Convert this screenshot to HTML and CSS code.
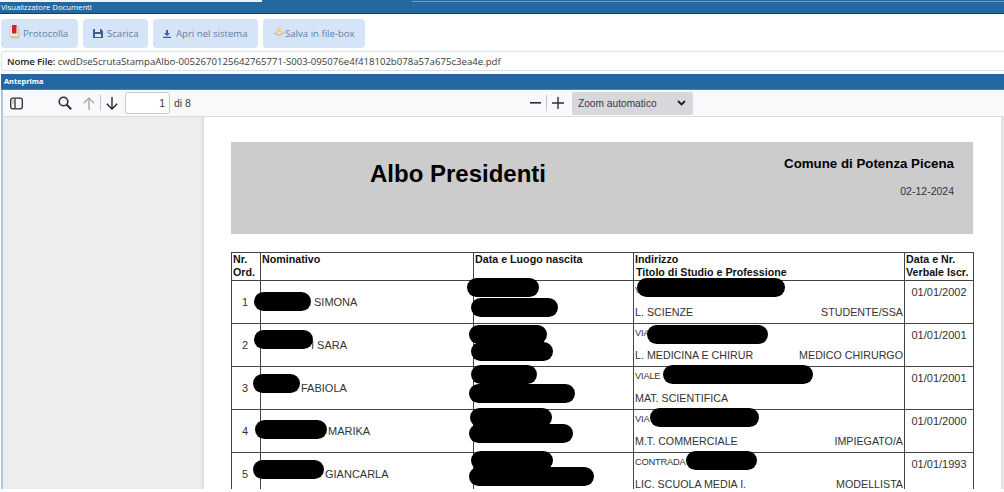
FILE: index.html
```html
<!DOCTYPE html>
<html lang="it">
<head>
<meta charset="utf-8">
<title>Visualizzatore Documenti</title>
<link rel="stylesheet" href="styles.css">
</head>
<body>
<div class="tabs"><span class="tab-a"></span><span class="tab-gap"></span><span class="tab-b"></span></div>
<header class="titlebar">Visualizzatore Documenti</header>
<nav class="actions">
  <button class="btn b1"><svg width="11" height="14" viewBox="0 0 11 14"><path d="M1 1.500h8v10H1z" fill="#f3efe6" stroke="#bdb39c" stroke-width=".6"/><path d="M3 0h4.500v8.500H3z" fill="#c8242b"/><path d="M1 11.500l2 2h7.500V3.500L9 2v9.500z" fill="#cfc5ae"/></svg>Protocolla</button>
  <button class="btn b2"><svg width="10" height="9" viewBox="0 0 10 9"><path d="M0 0h8l2 2v7H0z" fill="#3f5f92"/><path d="M2 0h5v3H2zM2 5h6v3H2z" fill="#dbe6f6"/></svg>Scarica</button>
  <button class="btn b3"><svg width="8" height="8" viewBox="0 0 8 8"><path d="M3 0h2v3h2L4 6 1 3h2zM0 6.800h8V8H0z" fill="#3f5f92"/></svg>Apri nel sistema</button>
  <button class="btn b4"><svg width="14" height="10" viewBox="0 0 14 10"><path d="M1 6.500L7 9l6-3-3-1.500-5 .5z" fill="#b9bcc4"/><path d="M4.500 5.500l.5-4 3-1 1.500 4z" fill="#efd27a"/><path d="M3 6l4 1.500L11 5.500l-3-1z" fill="#f2e3ae"/></svg>Salva in file-box</button>
</nav>
<div class="filename"><b>Nome File:</b> cwdDseScrutaStampaAlbo-0052670125642765771-S003-095076e4f418102b078a57a675c3ea4e.pdf</div>
<section class="preview">
  <h2 class="preview-title">Anteprima</h2>
  <div class="toolbar">
    <div class="tool-left">
      <svg class="ic-side" width="13" height="13" viewBox="0 0 13 13" fill="none" stroke="#2b2b33" stroke-width="1.300"><rect x=".7" y="1.200" width="11.600" height="10.600" rx="2"/><path d="M5 1.500v10"/><path d="M2.700 3.800h.8M2.700 5.800h.8" stroke-width="1"/></svg>
      <svg class="ic-search" width="14" height="14" viewBox="0 0 14 14" fill="none" stroke="#2b2b33" stroke-width="1.600"><circle cx="5.500" cy="5.500" r="4.300"/><path d="M8.700 8.700l4.500 4.500" stroke-width="2"/></svg>
      <svg class="ic-up" width="12" height="13" viewBox="0 0 12 13" fill="none" stroke="#a9a9ae" stroke-width="1.400"><path d="M6 13V1M.8 6.200L6 1l5.200 5.200"/></svg>
      <span class="sep"></span>
      <svg class="ic-down" width="12" height="13" viewBox="0 0 12 13" fill="none" stroke="#2b2b33" stroke-width="1.400"><path d="M6 0v12M.8 6.800L6 12l5.200-5.200"/></svg>
      <span class="page-input">1</span>
      <span class="page-total">di 8</span>
    </div>
    <div class="tool-zoom">
      <svg width="11" height="2" viewBox="0 0 11 2"><path d="M0 0h11v1.600H0z" fill="#2b2b33"/></svg>
      <span class="sep sep-zoom"></span>
      <svg width="12" height="12" viewBox="0 0 12 12"><path d="M5.300 0h1.400v12H5.300zM0 5.300h12v1.400H0z" fill="#2b2b33"/></svg>
      <span class="zoom-select">Zoom automatico<svg width="9" height="6" viewBox="0 0 9 6" fill="none" stroke="#1c1c22" stroke-width="1.800"><path d="M1 1l3.500 3.500L8 1"/></svg></span>
    </div>
  </div>
  <div class="viewer">
    <aside class="sidebar"></aside>
    <main class="page">
      <div class="doc-head">
        <h1 class="doc-title">Albo Presidenti</h1>
        <div class="doc-meta">
          <div class="doc-town">Comune di Potenza Picena</div>
          <div class="doc-date">02-12-2024</div>
        </div>
      </div>
      <table class="albo">
        <colgroup><col class="c1"><col class="c2"><col class="c3"><col class="c4"><col class="c5"></colgroup>
        <thead>
          <tr><th>Nr.<br>Ord.</th><th>Nominativo</th><th>Data e Luogo nascita</th><th>Indirizzo<br><span class="th-sub">Titolo di Studio e Professione</span></th><th>Data e Nr.<br>Verbale Iscr.</th></tr>
        </thead>
        <tbody>
          <tr><td class="num">1</td><td class="name n1">SIMONA</td><td></td><td class="addr"><div class="street">V</div><div class="job"><span>L. SCIENZE</span><span>STUDENTE/SSA</span></div></td><td class="date">01/01/2002</td></tr>
          <tr><td class="num">2</td><td class="name n2">I SARA</td><td></td><td class="addr"><div class="street">VIA</div><div class="job"><span>L. MEDICINA E CHIRUR</span><span>MEDICO CHIRURGO</span></div></td><td class="date">01/01/2001</td></tr>
          <tr><td class="num">3</td><td class="name n3">FABIOLA</td><td></td><td class="addr"><div class="street">VIALE</div><div class="job"><span>MAT. SCIENTIFICA</span></div></td><td class="date">01/01/2001</td></tr>
          <tr><td class="num">4</td><td class="name n4">MARIKA</td><td></td><td class="addr"><div class="street">VIA</div><div class="job"><span>M.T. COMMERCIALE</span><span>IMPIEGATO/A</span></div></td><td class="date">01/01/2000</td></tr>
          <tr><td class="num">5</td><td class="name n5">GIANCARLA</td><td></td><td class="addr"><div class="street">CONTRADA</div><div class="job"><span>LIC. SCUOLA MEDIA I.</span><span>MODELLISTA</span></div></td><td class="date">01/01/1993</td></tr>
        </tbody>
      </table>
      <span class="mask m1"></span><span class="mask m2"></span><span class="mask m3"></span><span class="mask m4"></span><span class="mask m5"></span>
      <span class="mask d1a"></span><span class="mask d1b"></span><span class="mask d2a"></span><span class="mask d2b"></span><span class="mask d3a"></span><span class="mask d3b"></span><span class="mask d4a"></span><span class="mask d4b"></span><span class="mask d5a"></span><span class="mask d5b"></span>
      <span class="mask a1"></span><span class="mask a2"></span><span class="mask a3"></span><span class="mask a4"></span><span class="mask a5"></span>
    </main>
    <div class="scroll-edge"></div>
  </div>
</section>
</body>
</html>
```
FILE: styles.css
```css
* { box-sizing: border-box; }
html, body { height: 100%; }
body {
  margin: 0;
  height: 492px;
  overflow: hidden;
  background: #fff;
  display: flex;
  flex-direction: column;
  font-family: "Open Sans", sans-serif;
}
.tabs { display: flex; height: 2px; flex: none; background: #2468a2; }
.tab-a { width: 262px; background: #eef3f8; }
.tab-gap { width: 150px; }
.tab-b { flex: 1; background: #6f9ec6; height: 1px; margin-top: 1px; }
.titlebar {
  flex: none;
  height: 12px;
  background: #2468a2;
  border-bottom: 1px solid #17405f;
  color: #fff;
  font-size: 7.700px;
  line-height: 11px;
  padding-left: 1px;
  white-space: nowrap;
}
.actions { flex: none; display: flex; gap: 5px; padding: 5px 0 0 1px; height: 34px; }
.btn {
  height: 29px;
  display: flex;
  align-items: center;
  border: 0;
  border-radius: 4px;
  background: #d6e4f8;
  color: #5f7fa8;
  font: 9.600px/1 "Open Sans", sans-serif;
  padding: 0;
  white-space: nowrap;
}
.b1 { width: 77px; padding-left: 8px; }
.b1 svg { margin-right: 3px; margin-top: -4px; }
.b2 { width: 65px; padding-left: 10px; }
.b2 svg { margin-right: 4px; }
.b3 { width: 105px; padding-left: 10px; }
.b3 svg { margin-right: 5px; }
.b4 { width: 102px; padding-left: 9px; }
.b4 svg { margin-right: -1px; margin-top: -3px; }
.filename {
  flex: none;
  height: 20px;
  margin: 3px 0 3px 1px;
  padding-left: 5px;
  border: 1px solid #d5e4f0;
  border-right: 0;
  border-radius: 3px 0 0 3px;
  color: #3a3a3a;
  font-size: 9.620px;
  line-height: 19px;
  white-space: nowrap;
}
.filename b { font-weight: 600; color: #222; letter-spacing: -.1px; }
.preview {
  flex: 1;
  min-height: 0;
  margin-bottom: 3px;
  margin-left: 1px;
  border-left: 2px solid #a9c9e6;
  display: flex;
  flex-direction: column;
}
.preview-title {
  flex: none;
  margin: 0 0 0 -2px;
  height: 16px;
  background: #2468a2;
  border-bottom: 1px solid #5a7f9e;
  color: #fff;
  font-size: 7.400px;
  font-weight: 700;
  line-height: 15px;
  padding-left: 3px;
}
.toolbar {
  flex: none;
  height: 27px;
  background: #f9f9fb;
  border-bottom: 1px solid #dcdce0;
  position: relative;
  display: flex;
  align-items: center;
}
.tool-left { display: flex; align-items: center; color: #3a3a40; font: 10px "Liberation Sans", sans-serif; }
.ic-side { margin-left: 7px; }
.ic-search { margin-left: 35px; }
.ic-up { margin-left: 11px; }
.sep { width: 1px; height: 16px; background: #c4c4c8; margin: 0 5px; }
.page-input {
  width: 45px;
  height: 22px;
  margin-left: 7px;
  background: #fff;
  border: 1px solid #c8c8cc;
  border-radius: 3px;
  text-align: right;
  padding-right: 4px;
  font-size: 10.500px;
  line-height: 20px;
}
.page-total { margin-left: 4px; font-size: 10.500px; }
.tool-zoom { display: flex; align-items: center; margin-left: 339px; }
.sep-zoom { margin: 0 5px; }
.zoom-select {
  width: 121px;
  height: 23px;
  margin-left: 8px;
  background: #d8d8dc;
  border-radius: 2px;
  display: flex;
  align-items: center;
  justify-content: space-between;
  padding: 0 7px 0 6px;
  color: #3a3a40;
  font: 10.200px "Liberation Sans", sans-serif;
}
.viewer { flex: 1; min-height: 0; display: flex; overflow: hidden; }
.sidebar {
  flex: none;
  width: 201px;
  background: #ededf0;
  border-right: 1px solid #dfdfe3;
  box-shadow: inset -3px 0 3px -2px #d8d8dc;
}
.page {
  flex: 1;
  min-width: 0;
  margin-left: 1px;
  padding: 25px 28px 0 26px;
  background: #fff;
  position: relative;
  overflow: hidden;
  font-family: "Liberation Sans", sans-serif;
  color: #333;
}
.scroll-edge { flex: none; width: 3px; background: #e4e4e8; }
.doc-head {
  height: 92px;
  background: #ccc;
  margin-bottom: 18px;
  display: flex;
  position: relative;
  color: #000;
}
.doc-title { margin: 17px 0 0 139px; font-size: 24px; line-height: 30px; font-weight: 700; }
.doc-meta { margin-left: auto; padding: 14px 19px 0 0; text-align: right; }
.doc-town { font-size: 13.300px; line-height: 15px; font-weight: 700; }
.doc-date { margin-top: 14px; font-size: 10.500px; line-height: 13px; color: #333; }
.albo { width: 742px; table-layout: fixed; border-collapse: collapse; font-size: 11px; }
.c1 { width: 29px; } .c2 { width: 213px; } .c3 { width: 160px; } .c4 { width: 271px; } .c5 { width: 69px; }
.albo th, .albo td { border: 1px solid #444; padding: 0; vertical-align: top; }
.albo th {
  height: 28px;
  text-align: left;
  font-size: 10.700px;
  line-height: 12.500px;
  font-weight: 700;
  padding: 0 0 0 1px;
  color: #111;
  white-space: nowrap;
}
.th-sub { margin-left: 1px; }
.albo td { height: 43px; }
.albo .num { text-align: center; padding: 15px 2px 0 0; line-height: 13px; }
.albo .name { padding-top: 15px; line-height: 13px; }
.albo .n1 { padding-left: 53px; }
.albo .n2 { padding-left: 50px; }
.albo .n3 { padding-left: 40px; }
.albo .n4 { padding-left: 67px; }
.albo .n5 { padding-left: 64px; }
.albo .addr { padding: 0 1px 0 1px; }
.street { height: 25px; padding-top: 4px; font-size: 9.300px; line-height: 11px; letter-spacing: -.2px; }
.job { display: flex; justify-content: space-between; font-size: 10.700px; line-height: 13px; white-space: nowrap; }
.albo .date { text-align: center; padding-top: 5px; line-height: 13px; }
.mask { position: absolute; height: 19px; border-radius: 10px; background: #000; }
.m1 { left: 49px; top: 175px; width: 57px; }
.m2 { left: 49px; top: 213px; width: 59px; }
.m3 { left: 48px; top: 257px; width: 47px; }
.m4 { left: 50px; top: 303px; width: 72px; }
.m5 { left: 48px; top: 343px; width: 71px; }
.d1a { left: 262px; top: 161px; width: 72px; }
.d1b { left: 266px; top: 181px; width: 87px; }
.d2a { left: 264px; top: 208px; width: 78px; }
.d2b { left: 266px; top: 225px; width: 82px; }
.d3a { left: 266px; top: 248px; width: 66px; }
.d3b { left: 264px; top: 267px; width: 106px; }
.d4a { left: 265px; top: 291px; width: 82px; }
.d4b { left: 264px; top: 307px; width: 104px; }
.d5a { left: 266px; top: 334px; width: 82px; }
.d5b { left: 264px; top: 350px; width: 125px; }
.a1 { left: 432px; top: 161px; width: 148px; }
.a2 { left: 442px; top: 208px; width: 121px; }
.a3 { left: 458px; top: 248px; width: 150px; }
.a4 { left: 445px; top: 291px; width: 109px; }
.a5 { left: 481px; top: 334px; width: 71px; }
```
